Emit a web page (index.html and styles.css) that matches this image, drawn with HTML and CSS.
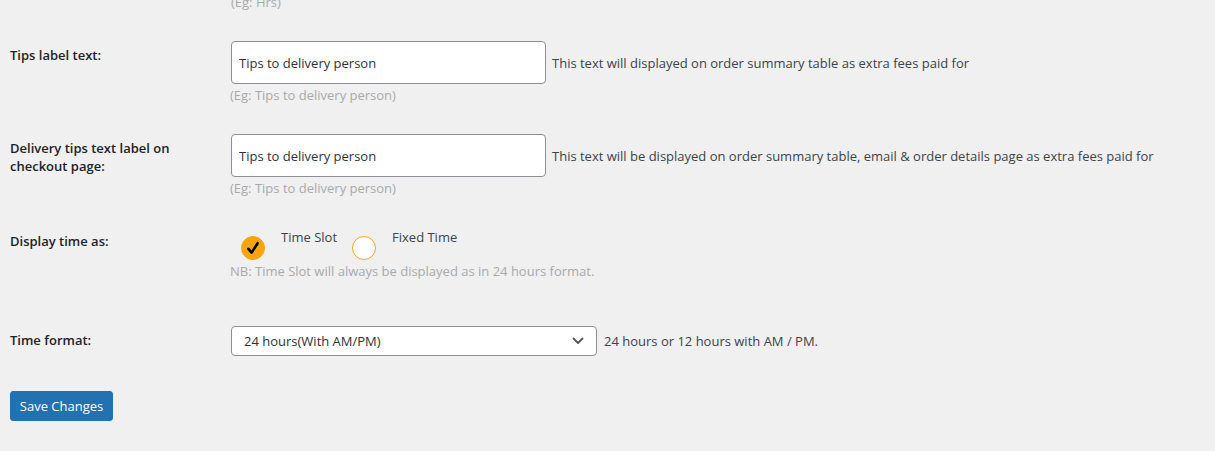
FILE: index.html
```html
<!DOCTYPE html>
<html lang="en">
<head>
<meta charset="utf-8">
<title>Delivery settings</title>
<link rel="stylesheet" href="styles.css">
</head>
<body>
<div class="wrap">
  <div class="top-hint"><span class="hint">(Eg: Hrs)</span></div>
  <table class="form-table">
    <tr>
      <th>Tips label text:</th>
      <td>
        <div class="field-line">
          <input class="text-input" type="text" value="Tips to delivery person">
          <span class="desc">This text will displayed on order summary table as extra fees paid for</span>
        </div>
        <div class="hint">(Eg: Tips to delivery person)</div>
      </td>
    </tr>
    <tr>
      <th>Delivery tips text label on checkout page:</th>
      <td>
        <div class="field-line">
          <input class="text-input" type="text" value="Tips to delivery person">
          <span class="desc">This text will be displayed on order summary table, email &amp; order details page as extra fees paid for</span>
        </div>
        <div class="hint">(Eg: Tips to delivery person)</div>
      </td>
    </tr>
    <tr>
      <th>Display time as:</th>
      <td class="radio-cell">
        <div class="radio-group">
          <label class="radio-item">
            <span class="radio checked">
              <svg viewBox="0 0 24 24" width="24" height="24"><path d="M7.4 12.8 L10.6 16.6 L16.6 7.2" fill="none" stroke="#000" stroke-width="2.6" stroke-linecap="round" stroke-linejoin="round"/></svg>
            </span>
            <span class="radio-text">Time Slot</span>
          </label>
          <label class="radio-item">
            <span class="radio"></span>
            <span class="radio-text">Fixed Time</span>
          </label>
        </div>
        <div class="hint">NB: Time Slot will always be displayed as in 24 hours format.</div>
      </td>
    </tr>
    <tr>
      <th>Time format:</th>
      <td>
        <div class="field-line select-line">
          <div class="select">
            <span class="select-value">24 hours(With AM/PM)</span>
            <svg class="chev" viewBox="0 0 12 8" width="12" height="8"><path d="M1.5 1.5 L6 6 L10.5 1.5" fill="none" stroke="#50575e" stroke-width="1.8" stroke-linecap="round" stroke-linejoin="round"/></svg>
          </div>
          <span class="desc">24 hours or 12 hours with AM / PM.</span>
        </div>
      </td>
    </tr>
  </table>
  <p class="submit"><button class="button-primary" type="button">Save Changes</button></p>
</div>
</body>
</html>
```
FILE: styles.css
```css
html, body {
  margin: 0;
  padding: 0;
  background: #f0f0f1;
}
body {
  font-family: "Segoe UI", "Open Sans", "Noto Sans", sans-serif;
  font-size: 13px;
  line-height: 18px;
  color: #3c434a;
  overflow: hidden;
}
.wrap {
  padding: 0 10px;
}
.top-hint {
  margin-top: -7px;
  padding-left: 221px;
  height: 18px;
}
.hint {
  color: #a7aaad;
  font-size: 13px;
  line-height: 18px;
}
.form-table {
  border-collapse: collapse;
  margin-top: 15px;
}
.form-table th {
  width: 200px;
  padding: 20px 10px 20px 0;
  text-align: left;
  vertical-align: top;
  font-weight: 600;
  font-size: 13px;
  line-height: 18px;
  color: #1d2327;
}
.form-table td {
  padding: 15px 10px;
  vertical-align: top;
}
.field-line {
  display: flex;
  align-items: center;
  gap: 5px;
}
.text-input {
  box-sizing: border-box;
  width: 315px;
  height: 43px;
  margin: 0 1px;
  padding: 0 7px;
  border: 1px solid #8c8f94;
  border-radius: 4px;
  background: #fff;
  font-family: inherit;
  font-size: 13px;
  color: #2c3338;
}
.desc {
  color: #3c434a;
  white-space: nowrap;
}
td > .hint {
  margin-top: 2px;
}
.radio-cell {
  padding-bottom: 31px !important;
}
.radio-group {
  display: flex;
  gap: 15px;
  padding-left: 11px;
  height: 35px;
}
.radio-item {
  display: flex;
  align-items: flex-start;
  gap: 16px;
}
.radio {
  box-sizing: border-box;
  width: 24px;
  height: 24px;
  border-radius: 50%;
  border: 1px solid #f5a623;
  background: #fff;
  margin-top: 9px;
  display: flex;
}
.radio.checked {
  background: #f7a50b;
  border-color: #f7a50b;
}
.radio svg {
  display: block;
  margin: -1px;
}
.radio-text {
  color: #3c434a;
  margin-top: 1px;
}
.radio-cell .hint {
  margin-top: 0;
}
.select-line {
  gap: 6px;
}
.select {
  box-sizing: border-box;
  width: 366px;
  height: 30px;
  margin: 0 1px;
  padding: 0 12px 0 12px;
  border: 1px solid #8c8f94;
  border-radius: 4px;
  background: #fff;
  display: flex;
  align-items: center;
  justify-content: space-between;
  color: #2c3338;
  font-size: 13px;
}
.chev {
  display: block;
}
.submit {
  margin: 20px 0 0;
  padding: 0;
}
.button-primary {
  box-sizing: border-box;
  height: 30px;
  width: 103px;
  padding: 0;
  border: 1px solid #2271b1;
  border-radius: 3px;
  background: #2271b1;
  color: #fff;
  font-family: inherit;
  font-size: 13px;
  white-space: nowrap;
  cursor: pointer;
}
```
